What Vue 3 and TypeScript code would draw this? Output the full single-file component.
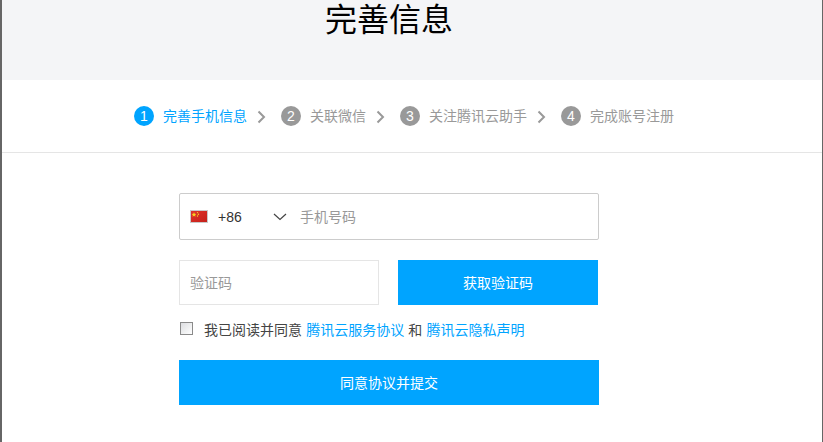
<script setup lang="ts">
const steps = [
  { n: 1, label: '完善手机信息', active: true },
  { n: 2, label: '关联微信', active: false },
  { n: 3, label: '关注腾讯云助手', active: false },
  { n: 4, label: '完成账号注册', active: false },
]
</script>

<template>
  <div class="page">
    <header class="hero">
      <h1>完善信息</h1>
    </header>
    <nav class="steps">
      <template v-for="(s, i) in steps" :key="s.n">
        <div class="step" :class="{ active: s.active }">
          <span class="num">{{ s.n }}</span>
          <span class="label">{{ s.label }}</span>
        </div>
        <svg v-if="i < steps.length - 1" class="chev" width="9" height="14" viewBox="0 0 9 14">
          <path d="M1.5 1.5l5.5 5.5-5.5 5.5" fill="none" stroke="#999" stroke-width="2" />
        </svg>
      </template>
    </nav>
    <form class="form" @submit.prevent>
      <div class="phone">
        <svg class="flag" width="18" height="13" viewBox="0 0 18 13">
          <defs>
            <linearGradient id="flagfill" x1="0" y1="0" x2="1" y2="1">
              <stop offset="0" stop-color="#e0342a" />
              <stop offset="1" stop-color="#c4201a" />
            </linearGradient>
          </defs>
          <rect x="0.5" y="0.5" width="17" height="12" fill="url(#flagfill)" stroke="#c9c9c9" />
          <path d="M4 2.2l.7 1.6 1.7.1-1.3 1.1.4 1.7L4 5.8l-1.5.9.4-1.7-1.3-1.1 1.7-.1z" fill="#f7d21f" />
          <circle cx="7.5" cy="2.6" r=".7" fill="#f7d21f" />
          <circle cx="8.4" cy="4.2" r=".7" fill="#f7d21f" />
          <circle cx="7.5" cy="6" r=".7" fill="#f7d21f" />
        </svg>
        <span class="code">+86</span>
        <svg class="caret" width="14" height="8" viewBox="0 0 14 8">
          <path d="M1 1l6 5.5L13 1" fill="none" stroke="#444" stroke-width="1.2" />
        </svg>
        <span class="ph">手机号码</span>
      </div>
      <div class="row">
        <div class="verify"><span class="ph">验证码</span></div>
        <button type="button" class="btn get">获取验证码</button>
      </div>
      <label class="agree">
        <span class="check"></span>
        <span class="agree-text">我已阅读并同意 <a>腾讯云服务协议</a> 和 <a>腾讯云隐私声明</a></span>
      </label>
      <button type="button" class="btn submit">同意协议并提交</button>
    </form>
  </div>
</template>

<style>
html, body { margin: 0; background: #fff; overflow: hidden; }
</style>

<style scoped>
.page {
  box-sizing: border-box;
  width: 823px;
  height: 442px;
  overflow: hidden;
  border-left: 2px solid #666;
  border-right: 1px solid #666;
  font-family: "Noto Sans CJK SC", "Liberation Sans", sans-serif;
  color: #333;
}
.hero {
  height: 80px;
  background: #f4f5f7;
  padding-left: 323px;
  box-sizing: border-box;
}
.hero h1 {
  margin: 0;
  font-size: 32px;
  font-weight: 400;
  line-height: 34px;
  color: #000;
}
.steps {
  box-sizing: border-box;
  height: 73px;
  border-bottom: 1px solid #e5e5e5;
  display: flex;
  align-items: center;
  padding-left: 132px;
}
.step { display: flex; align-items: center; color: #999; font-size: 14px; }
.step.active { color: #00a4ff; }
.label { line-height: 20px; padding-bottom: 2px; }
.num {
  width: 20px;
  height: 20px;
  border-radius: 50%;
  background: #999;
  color: #fff;
  font: 14px/20px "Liberation Sans", sans-serif;
  text-align: center;
  margin-right: 9px;
}
.step.active .num { background: #00a4ff; }
.chev { margin: 2px 15px 0 10px; }
.form {
  width: 420px;
  margin: 40px 0 0 177px;
}
.phone {
  box-sizing: border-box;
  height: 47px;
  border: 1px solid #ccc;
  border-radius: 2px;
  display: flex;
  align-items: center;
  padding-left: 10px;
}
.flag { flex: none; }
.code {
  font: 14px "Liberation Sans", sans-serif;
  color: #333;
  margin-left: 10px;
  width: 55px;
}
.caret { flex: none; margin-right: 13px; }
.ph { color: #999; font-size: 14px; line-height: 20px; padding-bottom: 2px; }
.row {
  display: flex;
  justify-content: space-between;
  width: 419px;
  margin-top: 20px;
}
.verify {
  box-sizing: border-box;
  width: 200px;
  height: 45px;
  border: 1px solid #e5e5e5;
  display: flex;
  align-items: center;
  padding-left: 10px;
}
.btn {
  border: 0;
  padding: 0 0 2px;
  background: #00a4ff;
  color: #fff;
  font-family: inherit;
  font-size: 14px;
  height: 45px;
}
.get { width: 200px; }
.agree {
  display: flex;
  align-items: center;
  height: 20px;
  margin-top: 15px;
  color: #444;
}
.check {
  box-sizing: border-box;
  width: 13px;
  height: 13px;
  margin: -3px 11px 0 1px;
  border: 1px solid #8a8a8a;
  background: linear-gradient(135deg, #dcdde0, #fff);
}
.agree-text { white-space: pre; font-size: 14px; line-height: 20px; padding-bottom: 2px; word-spacing: 1px; }
.agree a { color: #00a4ff; }
.submit { display: block; width: 420px; margin-top: 20px; }
</style>
